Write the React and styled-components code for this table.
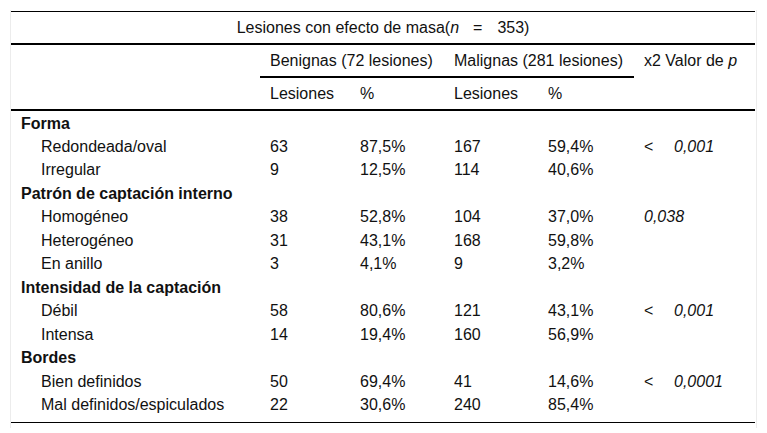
import React from 'react';
import styled, { createGlobalStyle } from 'styled-components';

const GlobalStyle = createGlobalStyle`
  body {
    margin: 0;
    background: #fff;
    font-family: "Liberation Sans", Arial, sans-serif;
    color: #111;
  }
`;

const Frame = styled.div`
  margin: 10px 0 0 10px;
  width: 745px;
  padding: 1px 0 5px;
  border-left: 1px solid #ececec;
  border-right: 1px solid #ececec;
`;

const Table = styled.table`
  width: 744px;
  table-layout: fixed;
  border-collapse: collapse;
  border-top: 1px solid #000;
  border-bottom: 1px solid #000;
  font-size: 16px;
`;

const TitleCell = styled.th`
  height: 31px;
  padding: 0;
  font-weight: normal;
  text-align: center;
  border-bottom: 2px solid #000;
`;

const HeadCell = styled.th`
  height: 31px;
  padding: 0 10px;
  font-weight: normal;
  text-align: left;
  white-space: nowrap;
  border-bottom: ${(p) => (p.$rule ? '2px solid #000' : 'none')};
  vertical-align: ${(p) => (p.$top ? 'top' : 'middle')};
  padding-top: ${(p) => (p.$top ? '7px' : '0')};
`;

const HeadRow = styled.tr`
  border-bottom: ${(p) => (p.$rule ? '2px solid #000' : 'none')};
`;

const Row = styled.tr`
  height: ${(p) => (p.$first ? '25px' : p.$last ? '29px' : '23.5px')};
  vertical-align: ${(p) => (p.$first ? 'bottom' : p.$last ? 'top' : 'middle')};
`;

const Cell = styled.td`
  padding: ${(p) => (p.$indent ? '0 10px 0 30px' : '0 10px')};
  padding-top: ${(p) => (p.$lastRow ? '2px' : '0')};
  padding-bottom: ${(p) => (p.$firstRow ? '2px' : '0')};
  white-space: nowrap;
  font-weight: ${(p) => (p.$bold ? 'bold' : 'normal')};
`;

const Italic = styled.i`
  font-style: italic;
`;

const Less = styled.span`
  display: inline-block;
  width: 30px;
`;

const Eq = styled.span`
  margin: 0 15px 0 14px;
`;

const sections = [
  {
    title: 'Forma',
    rows: [
      ['Redondeada/oval', '63', '87,5%', '167', '59,4%', '0,001', true],
      ['Irregular', '9', '12,5%', '114', '40,6%'],
    ],
  },
  {
    title: 'Patrón de captación interno',
    rows: [
      ['Homogéneo', '38', '52,8%', '104', '37,0%', '0,038', false],
      ['Heterogéneo', '31', '43,1%', '168', '59,8%'],
      ['En anillo', '3', '4,1%', '9', '3,2%'],
    ],
  },
  {
    title: 'Intensidad de la captación',
    rows: [
      ['Débil', '58', '80,6%', '121', '43,1%', '0,001', true],
      ['Intensa', '14', '19,4%', '160', '56,9%'],
    ],
  },
  {
    title: 'Bordes',
    rows: [
      ['Bien definidos', '50', '69,4%', '41', '14,6%', '0,0001', true],
      ['Mal definidos/espiculados', '22', '30,6%', '240', '85,4%'],
    ],
  },
];

const PValue = ({ value, less }) => {
  if (!value) return null;
  return (
    <>
      {less && <Less>&lt;</Less>}
      <Italic>{value}</Italic>
    </>
  );
};

export default function App() {
  const lastSection = sections[sections.length - 1];
  return (
    <>
      <GlobalStyle />
      <Frame>
        <Table>
          <colgroup>
            <col style={{ width: 249 }} />
            <col style={{ width: 90 }} />
            <col style={{ width: 94 }} />
            <col style={{ width: 94 }} />
            <col style={{ width: 96 }} />
            <col style={{ width: 121 }} />
          </colgroup>
          <thead>
            <tr>
              <TitleCell colSpan={6}>
                Lesiones con efecto de masa(<Italic>n</Italic>
                <Eq>=</Eq>353)
              </TitleCell>
            </tr>
            <tr>
              <HeadCell rowSpan={2} />
              <HeadCell colSpan={2} $rule>Benignas (72 lesiones)</HeadCell>
              <HeadCell colSpan={2} $rule>Malignas (281 lesiones)</HeadCell>
              <HeadCell rowSpan={2} $top>
                x2 Valor de <Italic>p</Italic>
              </HeadCell>
            </tr>
            <HeadRow $rule>
              <HeadCell>Lesiones</HeadCell>
              <HeadCell>%</HeadCell>
              <HeadCell>Lesiones</HeadCell>
              <HeadCell>%</HeadCell>
            </HeadRow>
          </thead>
          <tbody>
            {sections.map((section, si) => (
              <React.Fragment key={section.title}>
                <Row $first={si === 0}>
                  <Cell $bold colSpan={6} $firstRow={si === 0}>{section.title}</Cell>
                </Row>
                {section.rows.map((r, i) => {
                  const last = section === lastSection && i === section.rows.length - 1;
                  return (
                    <Row key={r[0]} $last={last}>
                      <Cell $indent $lastRow={last}>{r[0]}</Cell>
                      <Cell $lastRow={last}>{r[1]}</Cell>
                      <Cell $lastRow={last}>{r[2]}</Cell>
                      <Cell $lastRow={last}>{r[3]}</Cell>
                      <Cell $lastRow={last}>{r[4]}</Cell>
                      <Cell $lastRow={last}>
                        <PValue value={r[5]} less={r[6]} />
                      </Cell>
                    </Row>
                  );
                })}
              </React.Fragment>
            ))}
          </tbody>
        </Table>
      </Frame>
    </>
  );
}
